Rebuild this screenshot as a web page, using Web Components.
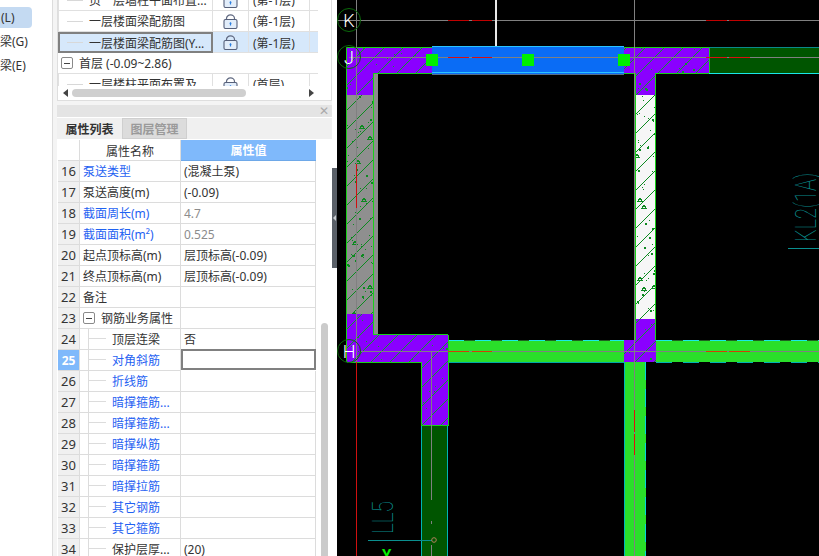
<!DOCTYPE html>
<html>
<head>
<meta charset="utf-8">
<title>属性列表</title>
<style>
  html, body { margin: 0; height: 100%; overflow: hidden; background: #fff; }
  body { font: 12px "Noto Sans", "Noto Sans CJK SC", sans-serif; color: #333; }
</style>
</head>
<body>
<app-shell>
  <side-nav slot="nav">
    <nav-item selected style="--shift:1px">(L)</nav-item>
    <nav-item style="--shift:-1px">梁(G)</nav-item>
    <nav-item style="--shift:-1px">梁(E)</nav-item>
  </side-nav>
  <floor-tree slot="tree">
    <tree-row floor="(第-1层)">页一层墙柱平面布置...</tree-row>
    <tree-row floor="(第-1层)">一层楼面梁配筋图</tree-row>
    <tree-row floor="(第-1层)" selected>一层楼面梁配筋图(Y...</tree-row>
    <tree-group>首层 (-0.09~2.86)</tree-group>
    <tree-row floor="(首层)">一层楼柱平面布置及</tree-row>
  </floor-tree>
  <prop-panel slot="props">
    <prop-row num="16" link value="(混凝土泵)">泵送类型</prop-row>
    <prop-row num="17" value="(-0.09)">泵送高度(m)</prop-row>
    <prop-row num="18" link value="4.7" muted>截面周长(m)</prop-row>
    <prop-row num="19" link value="0.525" muted>截面面积(m²)</prop-row>
    <prop-row num="20" value="层顶标高(-0.09)">起点顶标高(m)</prop-row>
    <prop-row num="21" value="层顶标高(-0.09)">终点顶标高(m)</prop-row>
    <prop-row num="22">备注</prop-row>
    <prop-row num="23" group>钢筋业务属性</prop-row>
    <prop-row num="24" child value="否">顶层连梁</prop-row>
    <prop-row num="25" child link active>对角斜筋</prop-row>
    <prop-row num="26" child link>折线筋</prop-row>
    <prop-row num="27" child link>暗撑箍筋...</prop-row>
    <prop-row num="28" child link>暗撑箍筋...</prop-row>
    <prop-row num="29" child link>暗撑纵筋</prop-row>
    <prop-row num="30" child link>暗撑箍筋</prop-row>
    <prop-row num="31" child link>暗撑拉筋</prop-row>
    <prop-row num="32" child link>其它钢筋</prop-row>
    <prop-row num="33" child link>其它箍筋</prop-row>
    <prop-row num="34" child value="(20)">保护层厚...</prop-row>
  </prop-panel>
  <cad-view slot="canvas"></cad-view>
</app-shell>

<script>
class AppShell extends HTMLElement {
  constructor() {
    super();
    this.attachShadow({ mode: "open" });
    this.shadowRoot.innerHTML = `
    <style>
      :host { display: flex; width: 819px; height: 556px; overflow: hidden; background: #fff; }
      .nav { width: 52px; flex: none; border-right: 1px solid #dcdcdc; }
      .mid { width: 275px; flex: none; padding: 0 0 0 4px; background: #f4f4f4; display: flex; flex-direction: column; gap: 4px; }
      .split { width: 5px; flex: none; background: #fff; padding-top: 168px; box-sizing: border-box; }
      .grip { height: 100px; background: #5a6068; display: flex; align-items: center; }
      .grip i { border: 3px solid transparent; border-right-color: #c8ccd0; border-left: 0; margin-left: 1px; }
      .canvas { flex: 1; min-width: 0; }
    </style>
    <div class="nav"><slot name="nav"></slot></div>
    <div class="mid"><slot name="tree"></slot><slot name="props"></slot></div>
    <div class="split"><div class="grip"><i></i></div></div>
    <div class="canvas"><slot name="canvas"></slot></div>`;
  }
}

class SideNav extends HTMLElement {
  constructor() {
    super();
    this.attachShadow({ mode: "open" });
    this.shadowRoot.innerHTML = `
    <style>:host { display: flex; flex-direction: column; gap: 2.5px; padding-top: 7px; overflow: hidden; height: 100%; box-sizing: border-box; }</style>
    <slot></slot>`;
  }
}

class NavItem extends HTMLElement {
  constructor() {
    super();
    this.attachShadow({ mode: "open" });
    this.shadowRoot.innerHTML = `
    <style>
      :host { display: flex; align-items: center; width: 32px; height: 21px; border-radius: 0 4px 4px 0; white-space: nowrap; padding-left: var(--shift, 0); box-sizing: border-box; }
      :host([selected]) { background: #c4daf2; }
    </style>
    <slot></slot>`;
  }
}

const LOCK_ICON = /* html */`
  <svg width="15" height="15" viewBox="0 0 15 15">
    <path d="M3.5 6V4.5a4 3.6 0 0 1 8 0V6" fill="none" stroke="#5f6880" stroke-width="1.2"/>
    <rect x="1" y="5.5" width="13" height="9" rx="1.5" fill="#e2edfa" stroke="#56607a" stroke-width="1.1"/>
    <path d="M7.5 8 9 9.6H8.1V11.6H6.9V9.6H6z" fill="#2b7fe0"/>
  </svg>`;

class FloorTree extends HTMLElement {
  constructor() {
    super();
    this.attachShadow({ mode: "open" });
    this.shadowRoot.innerHTML = `
    <style>
      :host { display: block; width: 275px; height: 101px; box-sizing: border-box; background: #fff; border: solid #dedede; border-width: 0 1px 1px 1px; position: relative; flex: none; overflow: hidden; }
      .rows { height: 86px; width: 260px; overflow: hidden; }
      .shift { margin-top: -10px; }
      .bar { height: 14px; display: flex; align-items: center; }
      .arrow { width: 0; border: 4px solid transparent; flex: none; }
      .left { border-right: 5px solid #444; border-left: 0; margin-left: 5px; }
      .right { border-left: 5px solid #444; border-right: 0; margin-left: 63px; }
      .thumb { width: 174px; height: 8px; margin-left: 4px; background: #cfcfcf; border-radius: 4px; flex: none; }
    </style>
    <div class="rows"><div class="shift"><slot></slot></div></div>
    <div class="bar"><span class="arrow left"></span><span class="thumb"></span><span class="arrow right"></span></div>`;
  }
}

class TreeRow extends HTMLElement {
  constructor() {
    super();
    this.attachShadow({ mode: "open" });
    this.shadowRoot.innerHTML = `
    <style>
      :host { display: grid; grid-template-columns: 155px 36px 61px 8px; height: 21px; box-sizing: border-box; border-bottom: 1px solid #e0e0e0; white-space: nowrap; }
      :host([selected]) { background: #d6e8fb; }
      .name, .lock, .floor { display: flex; align-items: center; border-right: 1px solid #e0e0e0; overflow: hidden; box-sizing: border-box; }
      .name { border-left: 1px solid #e0e0e0; position: relative; }
      .name::before { content: ""; width: 16px; height: 1px; background: #d8d8d8; margin: 0 6px 0 8px; flex: none; }
      :host([selected]) .name { outline: 2px solid #808080; outline-offset: -2px; height: 21px; }
      .lock { justify-content: center; }
      .floor { padding-left: 4px; }
      svg { display: block; }
    </style>
    <div class="name"><slot></slot></div>
    <div class="lock">${LOCK_ICON}</div>
    <div class="floor"></div><div></div>`;
  }
  connectedCallback() {
    this.shadowRoot.querySelector(".floor").textContent = this.getAttribute("floor");
  }
}

class TreeGroup extends HTMLElement {
  constructor() {
    super();
    this.attachShadow({ mode: "open" });
    this.shadowRoot.innerHTML = `
    <style>
      :host { display: flex; align-items: center; height: 21px; width: 260px; box-sizing: border-box; border-bottom: 1px solid #e0e0e0; padding-left: 3px; gap: 6px; white-space: nowrap; }
      .box { width: 10px; height: 10px; border: 1px solid #8a8a8a; border-radius: 2px; display: flex; align-items: center; justify-content: center; }
      .box i { width: 6px; height: 1px; background: #444; }
    </style>
    <span class="box"><i></i></span><slot></slot>`;
  }
}

class PropPanel extends HTMLElement {
  constructor() {
    super();
    this.attachShadow({ mode: "open" });
    this.shadowRoot.innerHTML = `
    <style>
      :host { display: flex; flex-direction: column; width: 275px; flex: none; height: 451px; overflow: hidden; background: #fff; }
      .title { height: 12px; flex: none; background: #e4e4e4; display: flex; justify-content: flex-end; align-items: center; padding-right: 3px; color: #aaa; font-size: 12px; line-height: 1; }
      .tabs { height: 22px; flex: none; box-sizing: border-box; display: flex; background: #f0f0f0; margin-bottom: 1px; border-top: 1px solid #fff; }
      .tab { width: 65px; display: flex; align-items: center; justify-content: center; font-weight: 700; box-sizing: border-box; }
      .tab.off { background: #dcdcdc; color: #9a9a9a; border: 1px solid #cfcfcf; }
      .body { display: grid; grid-template-columns: 259px 16px; flex: 1; min-height: 0; }
      .table { padding-left: 1px; }
      .head { display: grid; grid-template-columns: 22px 101px 135px; height: 21px; box-sizing: border-box; border-bottom: 1px solid #dcdcdc; }
      .head div { display: flex; align-items: center; justify-content: center; }
      .head .name { border-left: 1px solid #dcdcdc; border-right: 1px solid #dcdcdc; margin-left: -1px; }
      .head .value { background: #7fb9fb; color: #fff; font-weight: 700; height: 21px; box-sizing: border-box; border-bottom: 1px solid #6ea8e8; }
      .track { padding: 183px 4px 0 5px; background: #fff; }
      .thumb { width: 7px; height: 300px; background: #cbcbcb; border-radius: 4px 4px 0 0; }
    </style>
    <div class="title"><span>✕</span></div>
    <div class="tabs"><div class="tab">属性列表</div><div class="tab off">图层管理</div></div>
    <div class="body">
      <div class="table">
        <div class="head"><div></div><div class="name">属性名称</div><div class="value">属性值</div></div>
        <slot></slot>
      </div>
      <div class="track"><div class="thumb"></div></div>
    </div>`;
  }
}

class PropRow extends HTMLElement {
  constructor() {
    super();
    this.attachShadow({ mode: "open" });
    this.shadowRoot.innerHTML = `
    <style>
      :host { display: grid; grid-template-columns: 22px 101px 135px; height: 21px; white-space: nowrap; }
      .num { background: #f0f0f0; border: solid #dcdcdc; border-width: 0 1px 1px 0; display: flex; align-items: center; justify-content: center; font-size: 13px; box-sizing: border-box; }
      .name { border: solid #dcdcdc; border-width: 0 1px 1px 0; display: flex; align-items: center; padding-left: 3px; box-sizing: border-box; overflow: hidden; }
      .value { border: solid #dcdcdc; border-width: 0 1px 1px 0; display: flex; align-items: center; padding-left: 3px; box-sizing: border-box; }
      :host([link]) .name { color: #1f62f2; }
      :host([muted]) .value { color: #8c8c8c; }
      :host([active]) .num { background: #7fb9fb; color: #fff; font-weight: 700; font-size: 12px; }
      :host([active]) .value { border: 2px solid #808080; margin-top: -1px; height: 21px; }
      .box { display: none; width: 10px; height: 10px; border: 1px solid #8a8a8a; border-radius: 2px; margin-right: 6px; align-items: center; justify-content: center; flex: none; }
      .box i { width: 6px; height: 1px; background: #444; }
      :host([group]) .box { display: flex; }
      .line { display: none; width: 17px; align-self: stretch; flex: none; margin: 0 6px 0 8px; border-left: 1px solid #dcdcdc; position: relative; }
      .line::after { content: ""; position: absolute; left: 0; right: 0; top: 9px; height: 1px; background: #dcdcdc; }
      :host([child]) .line { display: block; }
      :host([child]) .name { padding-left: 0; }
    </style>
    <div class="num"></div>
    <div class="name"><span class="line"></span><span class="box"><i></i></span><slot></slot></div>
    <div class="value"></div>`;
  }
  connectedCallback() {
    this.shadowRoot.querySelector(".num").textContent = this.getAttribute("num");
    this.shadowRoot.querySelector(".value").textContent = this.getAttribute("value") || "";
  }
}

// fixed seed so the concrete speckles come out the same every run
let seed = 7;
const rnd = () => (seed = (seed * 16807) % 2147483647) / 2147483647;

// one filled region of the plan: base colour, 45 degree hatch, concrete speckles
function region(id, d, [x0, y0, x1, y1], fill, phase, color, density) {
  let lines = "";
  const first = Math.floor((x0 + y0) / 19) * 19 + phase;
  for (let k = first; k < x1 + y1; k += 19) {
    lines += `<line x1="${k - y1}" y1="${y1}" x2="${k - y0}" y2="${y0}"/>`;
  }
  let marks = "";
  const count = Math.round((x1 - x0) * (y1 - y0) * density);
  for (let i = 0; i < count; i++) {
    const x = Math.round(x0 + rnd() * (x1 - x0));
    const y = Math.round(y0 + rnd() * (y1 - y0));
    const kind = rnd();
    if (kind < 0.7) marks += `<rect x="${x}" y="${y}" width="1" height="1"/>`;
    else if (kind < 0.92) marks += `<rect x="${x}" y="${y}" width="2" height="2"/>`;
    else marks += `<path d="M${x} ${y}l2 3h-4z" fill="none" stroke="${color}"/>`;
  }
  return `
    <clipPath id="${id}"><path d="${d}"/></clipPath>
    <path d="${d}" fill="${fill}"/>
    <g clip-path="url(#${id})" fill="${color}">
      <g stroke="${color}" fill="none">${lines}</g>${marks}
    </g>`;
}

const PURPLE = "#8a00ff";
const REGIONS = [
  region("wallGrey", "M346 95H373V315H346Z", [346, 95, 373, 315], "#8f8f8f", 1, "#0c8a20", 0.012),
  region("wallWhite", "M635 95H656V320H635Z", [635, 95, 656, 320], "#f6f6f6", 9, "#0c8a20", 0.012),
  region("colTopLeft", "M346 47H432V73H373V95H346Z", [346, 47, 432, 95], PURPLE, 14, "#0c9a2c", 0.004),
  region("colTopRight", "M624 47H709V73H656V95H635V73H624Z", [624, 47, 709, 95], PURPLE, 9, "#0c9a2c", 0.004),
  region("colBottomLeft", "M346 314H373V335H448V426H421V362H346Z", [346, 314, 448, 426], PURPLE, 11, "#0c9a2c", 0.004),
  region("colBottomRight", "M635 319H656V362H624V340H635Z", [624, 319, 656, 362], PURPLE, 9, "#0c9a2c", 0.004),
].join("");

class CadView extends HTMLElement {
  constructor() {
    super();
    this.attachShadow({ mode: "open" });
    this.shadowRoot.innerHTML = `
    <style>
      :host { display: block; width: 482px; height: 556px; background: #000; overflow: hidden; }
      svg { display: block; }
      text { font-family: Roboto, "Liberation Sans", sans-serif; }
      .axis { fill: #fff; font-size: 18px; font-weight: 300; text-anchor: middle; }
      .tag { fill: #0a8f8f; font-size: 30px; font-weight: 100; }
    </style>
    <svg width="482" height="556" viewBox="337 0 482 556" shape-rendering="crispEdges">
      <!-- walls and columns -->
      <rect x="373" y="73" width="5" height="262" fill="#8c8c8c"/>
      ${REGIONS}

      <!-- beams -->
      <rect x="709" y="47" width="110" height="26" fill="#005500"/>
      <line x1="709" y1="47.5" x2="819" y2="47.5" stroke="#0a8a8a"/>
      <line x1="656" y1="73.5" x2="819" y2="73.5" stroke="#19e8e8"/>
      <rect x="421" y="426" width="27" height="130" fill="#005500"/>
      <path d="M421.5 426V556M447.5 426V556" stroke="#00b4b4" fill="none"/>
      <rect x="448" y="340" width="176" height="22" fill="#2adf2a"/>
      <rect x="656" y="340" width="163" height="22" fill="#2adf2a"/>
      <rect x="624" y="362" width="22" height="194" fill="#2adf2a"/>
      <g stroke-width="1" fill="none">
        <path d="M448 340.5H624M656 340.5H819" stroke="#206020"/>
        <path d="M448 340.5H624M656 340.5H819" stroke="#19e8e8" stroke-dasharray="16 11"/>
        <path d="M448 362.5H624" stroke="#00a8a8"/>
        <path d="M656 362.5H819" stroke="#00b4b4" stroke-dasharray="16 11"/>
        <path d="M624.5 362V556" stroke="#00b8b8"/>
        <path d="M645.5 362V556" stroke="#00d8d8" stroke-dasharray="18 9"/>
      </g>

      <!-- green outlines -->
      <g fill="none" stroke="#18d018">
        <path d="M346.5 47.5H432M432 73.5H373.5V334.5H448M346.5 47.5V362M346.5 362.5H421.5V426M448 335V426M421 425.5H448"/>
        <path d="M624 47.5H709M709 47.5V73M635.5 73V340M655.5 73V340M656 73.5H709M624 73.5H635"/>
      </g>

      <!-- grid lines -->
      <g stroke="#808080" fill="none">
        <path d="M337 20.5H819M349 57.5H819M360 351.5H819"/>
        <path d="M356.5 0V362M634.5 0V556M431.5 351V500M431.5 521V524M431.5 545V556"/>
      </g>
      <path d="M495.5 0V46" stroke="#e8e8e8" stroke-width="2"/>

      <!-- selected beam -->
      <rect x="432" y="46" width="192" height="28" fill="#0a6cf5"/>
      <path d="M432 46.5H624" stroke="#2ac4ff"/>
      <path d="M432 72.5H624" stroke="#2ac4ff"/>
      <path d="M432 74.5H624" stroke="#5a6f8a"/>
      <path d="M432 57.5H624" stroke="#808080"/>
      <g fill="#00f000">
        <rect x="426" y="54" width="12" height="12"/>
        <rect x="522" y="54" width="12" height="12"/>
        <rect x="618" y="54" width="12" height="12"/>
      </g>

      <!-- red marks -->
      <g fill="none" stroke="#c00000">
        <path d="M448 20.5H469M472 20.5H492M706 20.5H727M729 20.5H750"/>
        <path d="M448 57.5H469M472 57.5H492M706 57.5H727M729 57.5H750" stroke="#d81010"/>
        <path d="M448 351.5H469M472 351.5H492M706 351.5H727M729 351.5H750" stroke="#d0400a"/>
        <path d="M356.5 164V208M356.5 362V556" stroke="#d01010"/>
        <path d="M634.5 410V432M634.5 434V455" stroke="#e01010"/>
      </g>

      <!-- axis bubbles -->
      <g fill="none" stroke="#0a6a0a" shape-rendering="auto">
        <circle cx="349" cy="20" r="11.5"/>
        <circle cx="349" cy="57" r="11.5"/>
        <circle cx="349" cy="351" r="11.5"/>
      </g>
      <text class="axis" x="349" y="26.5">K</text>
      <text class="axis" x="349" y="63.5">J</text>
      <text class="axis" x="349" y="357.5">H</text>

      <!-- beam tags -->
      <path d="M788 248.5H819M368 540.5H432" stroke="#0a8f8f" fill="none"/>
      <text class="tag" transform="translate(816 242) rotate(-90)" textLength="69" lengthAdjust="spacingAndGlyphs">KL2(1A)</text>
      <text class="tag" transform="translate(393 534) rotate(-90)" textLength="33" lengthAdjust="spacingAndGlyphs">LL5</text>
      <circle cx="434" cy="540" r="2.3" fill="none" stroke="#b0805a" shape-rendering="auto"/>
      <text x="382" y="560" font-size="15" font-weight="700" fill="#00f000">Y</text>
    </svg>`;
  }
}

customElements.define("app-shell", AppShell);
customElements.define("side-nav", SideNav);
customElements.define("nav-item", NavItem);
customElements.define("floor-tree", FloorTree);
customElements.define("tree-row", TreeRow);
customElements.define("tree-group", TreeGroup);
customElements.define("prop-panel", PropPanel);
customElements.define("prop-row", PropRow);
customElements.define("cad-view", CadView);
</script>
</body>
</html>
